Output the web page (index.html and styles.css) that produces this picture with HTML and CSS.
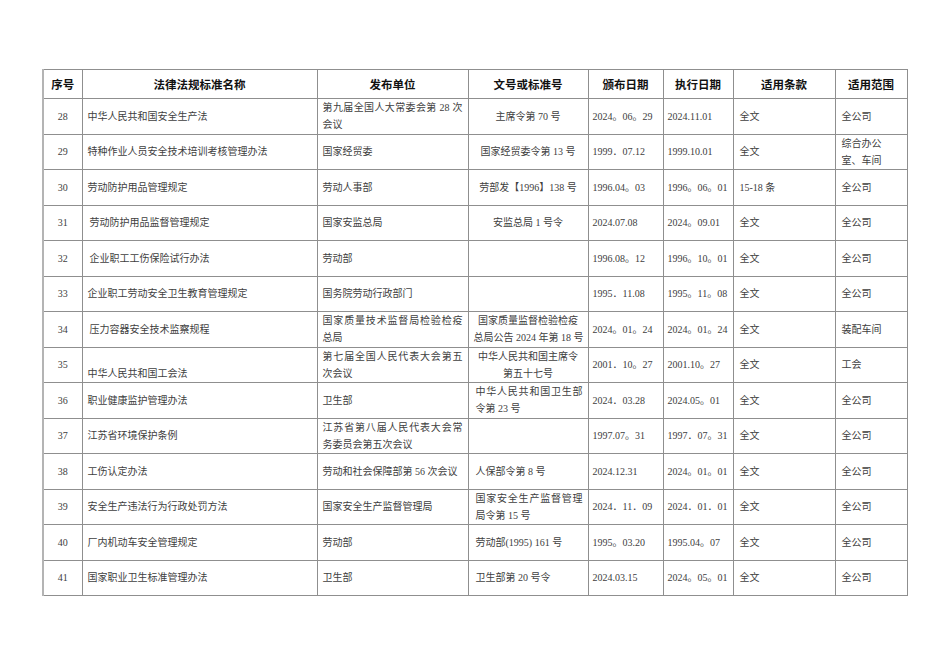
FILE: index.html
```html
<!DOCTYPE html>
<html lang="zh">
<head>
<meta charset="utf-8">
<title>法律法规清单</title>
<link rel="stylesheet" href="styles.css">
</head>
<body>
<div class="page">
<table class="law">
<colgroup>
<col class="c-no"><col class="c-name"><col class="c-org"><col class="c-doc"><col class="c-date"><col class="c-exec"><col class="c-clause"><col class="c-scope">
</colgroup>
<thead>
<tr class="head">
<th>序号</th><th>法律法规标准名称</th><th>发布单位</th><th>文号或标准号</th><th>颁布日期</th><th>执行日期</th><th>适用条款</th><th>适用范围</th>
</tr>
</thead>
<tbody>
<tr class="r">
<td class="no">28</td><td class="name">中华人民共和国安全生产法</td>
<td class="org"><div class="j">第九届全国人大常委会第 28 次</div><div>会议</div></td>
<td class="doc ctr">主席令第 70 号</td><td class="date">2024。06。29</td><td class="date">2024.11.01</td><td class="txt">全文</td><td class="txt">全公司</td>
</tr>
<tr class="r">
<td class="no">29</td><td class="name">特种作业人员安全技术培训考核管理办法</td>
<td class="org">国家经贸委</td>
<td class="doc ctr">国家经贸委令第 13 号</td><td class="date">1999．07.12</td><td class="date">1999.10.01</td><td class="txt">全文</td><td class="txt">综合办公<br>室、车间</td>
</tr>
<tr class="r">
<td class="no">30</td><td class="name">劳动防护用品管理规定</td>
<td class="org">劳动人事部</td>
<td class="doc ctr">劳部发【1996】138 号</td><td class="date">1996.04。03</td><td class="date">1996。06。01</td><td class="txt">15-18 条</td><td class="txt">全公司</td>
</tr>
<tr class="r">
<td class="no">31</td><td class="name ind">劳动防护用品监督管理规定</td>
<td class="org">国家安监总局</td>
<td class="doc ctr">安监总局 1 号令</td><td class="date">2024.07.08</td><td class="date">2024。09.01</td><td class="txt">全文</td><td class="txt">全公司</td>
</tr>
<tr class="r">
<td class="no">32</td><td class="name ind">企业职工工伤保险试行办法</td>
<td class="org">劳动部</td>
<td class="doc"></td><td class="date">1996.08。12</td><td class="date">1996。10。01</td><td class="txt">全文</td><td class="txt">全公司</td>
</tr>
<tr class="r">
<td class="no">33</td><td class="name">企业职工劳动安全卫生教育管理规定</td>
<td class="org">国务院劳动行政部门</td>
<td class="doc"></td><td class="date">1995．11.08</td><td class="date">1995。11。08</td><td class="txt">全文</td><td class="txt">全公司</td>
</tr>
<tr class="r">
<td class="no">34</td><td class="name ind">压力容器安全技术监察规程</td>
<td class="org"><div class="j">国家质量技术监督局检验检疫</div><div>总局</div></td>
<td class="doc ctr"><div>国家质量监督检验检疫</div><div>总局公告 2024 年第 18 号</div></td><td class="date">2024。01。24</td><td class="date">2024。01。24</td><td class="txt">全文</td><td class="txt">装配车间</td>
</tr>
<tr class="r">
<td class="no">35</td><td class="name bottom">中华人民共和国工会法</td>
<td class="org"><div class="j">第七届全国人民代表大会第五</div><div>次会议</div></td>
<td class="doc ctr"><div>中华人民共和国主席令</div><div>第五十七号</div></td><td class="date">2001．10。27</td><td class="date">2001.10。27</td><td class="txt">全文</td><td class="txt">工会</td>
</tr>
<tr class="r">
<td class="no">36</td><td class="name">职业健康监护管理办法</td>
<td class="org">卫生部</td>
<td class="doc"><div class="j">中华人民共和国卫生部</div><div>令第 23 号</div></td><td class="date">2024．03.28</td><td class="date">2024.05。01</td><td class="txt">全文</td><td class="txt">全公司</td>
</tr>
<tr class="r">
<td class="no">37</td><td class="name">江苏省环境保护条例</td>
<td class="org"><div class="j">江苏省第八届人民代表大会常</div><div>务委员会第五次会议</div></td>
<td class="doc"></td><td class="date">1997.07。31</td><td class="date">1997．07。31</td><td class="txt">全文</td><td class="txt">全公司</td>
</tr>
<tr class="r">
<td class="no">38</td><td class="name">工伤认定办法</td>
<td class="org">劳动和社会保障部第 56 次会议</td>
<td class="doc">人保部令第 8 号</td><td class="date">2024.12.31</td><td class="date">2024。01。01</td><td class="txt">全文</td><td class="txt">全公司</td>
</tr>
<tr class="r">
<td class="no">39</td><td class="name">安全生产违法行为行政处罚方法</td>
<td class="org">国家安全生产监督管理局</td>
<td class="doc"><div class="j">国家安全生产监督管理</div><div>局令第 15 号</div></td><td class="date">2024．11．09</td><td class="date">2024．01．01</td><td class="txt">全文</td><td class="txt">全公司</td>
</tr>
<tr class="r">
<td class="no">40</td><td class="name">厂内机动车安全管理规定</td>
<td class="org">劳动部</td>
<td class="doc">劳动部(1995) 161 号</td><td class="date">1995。03.20</td><td class="date">1995.04。07</td><td class="txt">全文</td><td class="txt">全公司</td>
</tr>
<tr class="r">
<td class="no">41</td><td class="name">国家职业卫生标准管理办法</td>
<td class="org">卫生部</td>
<td class="doc">卫生部第 20 号令</td><td class="date">2024.03.15</td><td class="date">2024。05。01</td><td class="txt">全文</td><td class="txt">全公司</td>
</tr>
</tbody>
</table>
</div>
</body>
</html>
```
FILE: styles.css
```css
html, body {
  margin: 0;
  padding: 0;
  background: #ffffff;
}

.page {
  padding: 69px 0 0 42px;
}

.law {
  border-collapse: collapse;
  table-layout: fixed;
  width: 864px;
  font-family: "Liberation Serif", "Noto Sans CJK SC", serif;
  font-size: 10px;
  line-height: 17px;
  color: #404040;
}

.c-no { width: 39px; }
.c-name { width: 235px; }
.c-org { width: 151px; }
.c-doc { width: 120px; }
.c-date { width: 75px; }
.c-exec { width: 70px; }
.c-clause { width: 102px; }
.c-scope { width: 72px; }

.law th,
.law td {
  border: 1px solid #8f8f8f;
  padding: 0;
  vertical-align: middle;
  overflow: hidden;
  white-space: nowrap;
}

.law tr > :first-child {
  border-left: 2px solid #b4b4b4;
}

.head {
  height: 29px;
}

.head th {
  font-family: "Noto Sans CJK SC", sans-serif;
  font-size: 11.5px;
  font-weight: 700;
  color: #111111;
  text-align: center;
  line-height: 16px;
}

.r {
  height: 35.5px;
}

.no {
  text-align: center;
}

.name {
  padding-left: 5px !important;
}

.name.ind {
  padding-left: 7px !important;
}

.name.bottom {
  vertical-align: bottom !important;
}

.org {
  padding: 0 5px !important;
}

.doc {
  padding: 0 5px 0 7px !important;
}

.doc.ctr {
  padding: 0 5px !important;
  text-align: center;
}

.date {
  padding-left: 4px !important;
}

.txt {
  padding-left: 6px !important;
}

.j {
  text-align: justify;
  text-align-last: justify;
}
```
